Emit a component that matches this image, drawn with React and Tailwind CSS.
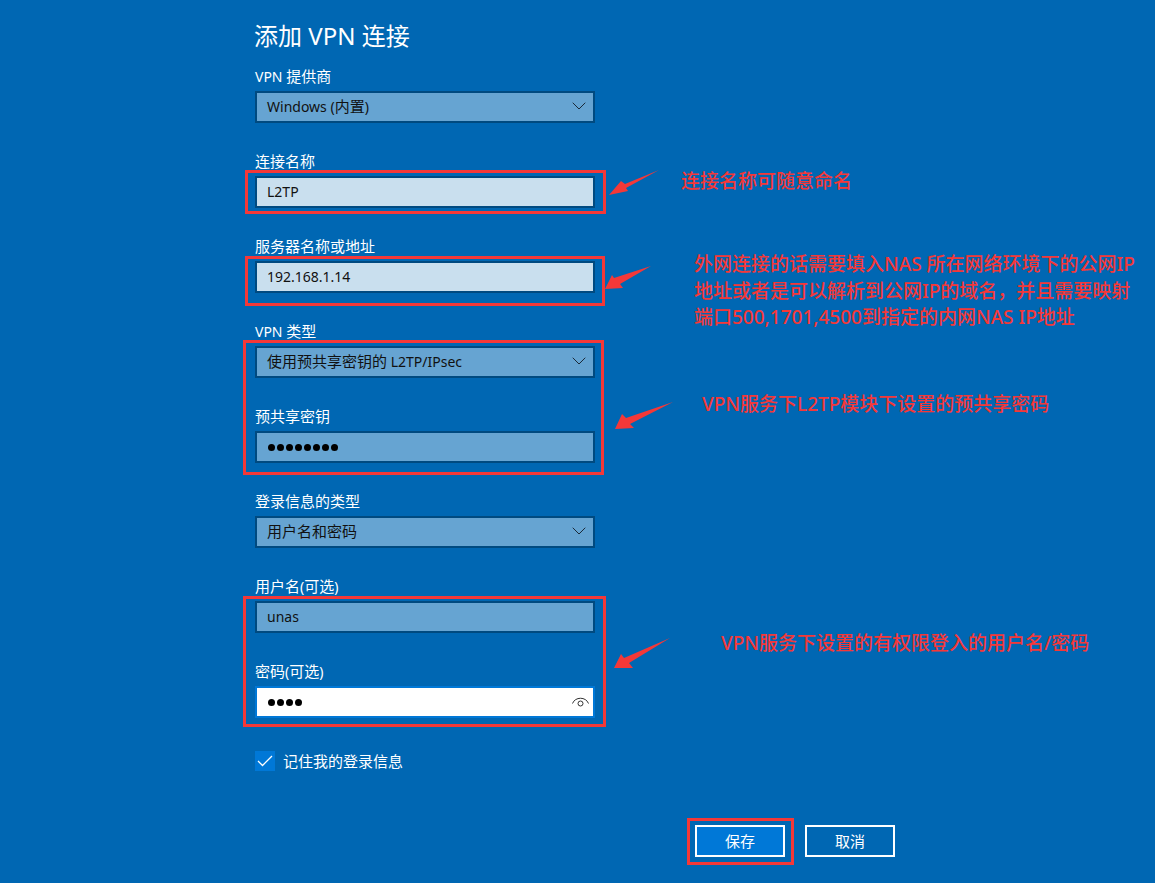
import { ChevronDown } from "lucide-react";

const uiFont = "font-['Noto_Sans','Noto_Sans_CJK_SC',sans-serif]";

// latin runs are a touch narrower than the CJK text next to them
function L({ children }) {
  return <span className="text-[14px]">{children}</span>;
}

function Field({ label, children }) {
  return (
    <div className="mb-[27px]">
      <div className="h-[26px] text-[15px] leading-[22px] text-white">{label}</div>
      {children}
    </div>
  );
}

function Box({ children, light, icon }) {
  return (
    <div
      className={`flex h-[32px] w-[340px] items-center justify-between border-2 border-[#004a80] pb-[2px] pl-[10px] pr-[2px] text-[15px] text-[#111] ${
        light ? "bg-[#c9dfee]" : "bg-[#66a4d2]"
      }`}
    >
      <span>{children}</span>
      {icon && <ChevronDown size={24} strokeWidth={1} className="text-[#1b2a38]" />}
    </div>
  );
}

function Dots({ n }) {
  return (
    <span className="flex gap-[2px] pl-[1px]">
      {Array.from({ length: n }).map((_, i) => (
        <span key={i} className="h-[7px] w-[7px] rounded-full bg-black" />
      ))}
    </span>
  );
}

function Arrow({ points }) {
  return <polygon points={points} fill="#f43838" />;
}

export default function App() {
  return (
    <div className={`relative h-[883px] w-[1155px] overflow-hidden bg-[#0067b3] ${uiFont}`}>
      <div className="ml-[255px] w-[640px]">
        <h1 className="-ml-[1px] h-[65px] pt-[18px] text-[24px] leading-[36px] text-white">添加 VPN 连接</h1>
        <Field label={<><L>VPN </L>提供商</>}>
          <Box icon><L>Windows (</L>内置<L>)</L></Box>
        </Field>
        <Field label="连接名称">
          <Box light><L>L2TP</L></Box>
        </Field>
        <Field label="服务器名称或地址">
          <Box light><L>192.168.1.14</L></Box>
        </Field>
        <Field label={<><L>VPN </L>类型</>}>
          <Box icon>使用预共享密钥的<L> L2TP/IPsec</L></Box>
        </Field>
        <Field label="预共享密钥">
          <Box>
            <span className="block pt-[2px]"><Dots n={8} /></span>
          </Box>
        </Field>
        <Field label="登录信息的类型">
          <Box icon>用户名和密码</Box>
        </Field>
        <Field label={<>用户名<L>(</L>可选<L>)</L></>}>
          <Box><L>unas</L></Box>
        </Field>
        <Field label={<>密码<L>(</L>可选<L>)</L></>}>
          <div className="flex h-[32px] w-[340px] items-center justify-between border-2 border-[#0078d7] bg-white pl-[10px] pr-[4px]">
            <Dots n={4} />
            <svg width="17" height="12" viewBox="0 0 17 12" fill="none" stroke="#333" strokeWidth="1">
              <path d="M0.5 7.5 C3 0.5 14 0.5 16.5 7.5" />
              <circle cx="8.5" cy="7.5" r="2.5" />
            </svg>
          </div>
        </Field>
        <div className="mt-[33px] flex h-[20px] items-center gap-[8px] text-[15px] text-white">
          <span className="flex h-[20px] w-[20px] items-center justify-center bg-[#0078d7]">
            <svg width="16" height="12" viewBox="0 0 16 12" fill="none" stroke="white" strokeWidth="1.3">
              <path d="M1 6 L5.5 10.5 L15 1" />
            </svg>
          </span>
          记住我的登录信息
        </div>
        <div className="mt-[54px] flex justify-end gap-[20px] text-[15px] text-white">
          <button className="h-[32px] w-[90px] border-2 border-white bg-[#0078d7]">保存</button>
          <button className="h-[32px] w-[90px] border-2 border-white">取消</button>
        </div>
      </div>

      {/* annotations drawn over the dialog */}
      <div className="absolute left-[245px] top-[170px] h-[44px] w-[361px] border-[3px] border-[#f43838]" />
      <div className="absolute left-[245px] top-[256px] h-[50px] w-[360px] border-[3px] border-[#f43838]" />
      <div className="absolute left-[243px] top-[340px] h-[135px] w-[361px] border-[3px] border-[#f43838]" />
      <div className="absolute left-[243px] top-[596px] h-[131px] w-[363px] border-[3px] border-[#f43838]" />
      <div className="absolute left-[687px] top-[818px] h-[47px] w-[107px] border-[3px] border-[#f43838]" />

      <svg className="absolute left-0 top-0" width="1155" height="883">
        <Arrow points="659,170 625,184 621,181 609,195 628,191 626,188" />
        <Arrow points="651,266 614,278 612,275 605,289 623,288 620,284" />
        <Arrow points="673,402 626,418 622,414 615,429 634,428 630,424" />
        <Arrow points="670,638 624,658 621,654 614,668 633,668 629,663" />
      </svg>

      <div className="absolute left-[681px] top-[168px] text-[19px] font-medium leading-[26px] text-[#f43838]">连接名称可随意命名</div>
      <div className="absolute left-[694px] top-[251px] w-[450px] text-[19px] font-medium leading-[26.5px] text-[#f43838]">
        <div>外网连接的话需要填入NAS 所在网络环境下的公网IP</div>
        <div>地址或者是可以解析到公网IP的域名，并且需要映射</div>
        <div>端口500,1701,4500到指定的内网NAS IP地址</div>
      </div>
      <div className="absolute left-[702px] top-[391px] text-[19px] font-medium leading-[26px] text-[#f43838]">VPN服务下L2TP模块下设置的预共享密码</div>
      <div className="absolute left-[721px] top-[630px] text-[19px] font-medium leading-[26px] text-[#f43838]">VPN服务下设置的有权限登入的用户名/密码</div>
    </div>
  );
}
